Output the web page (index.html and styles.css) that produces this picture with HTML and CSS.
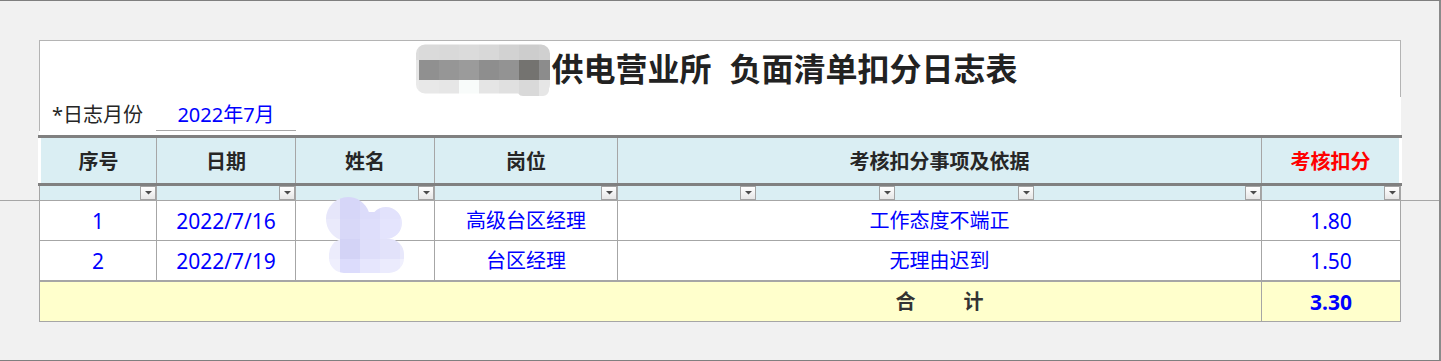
FILE: index.html
```html
<!DOCTYPE html>
<html lang="zh-CN">
<head>
<meta charset="utf-8">
<title>负面清单扣分日志表</title>
<link rel="stylesheet" href="styles.css">
</head>
<body>
<div class="frame">
  <div class="sheet">
    <div class="titlebox">
      <div class="title">
        <svg class="blur-title" width="136" height="56" viewBox="416 41 136 56" aria-hidden="true">
          <defs>
            <clipPath id="tclip">
              <rect x="417" y="44.5" width="134" height="49" rx="9"/>
              <rect x="518" y="60" width="32" height="36" rx="6"/>
            </clipPath>
          </defs>
          <g clip-path="url(#tclip)">
            <rect x="410" y="40" width="10" height="20" fill="#dddddd"/>
            <rect x="420" y="40" width="20" height="20" fill="#dadada"/>
            <rect x="440" y="40" width="20" height="20" fill="#d9d9d9"/>
            <rect x="460" y="40" width="20" height="20" fill="#dbdbdb"/>
            <rect x="480" y="40" width="20" height="20" fill="#d8d8d8"/>
            <rect x="500" y="40" width="20" height="20" fill="#d2d2d2"/>
            <rect x="520" y="40" width="20" height="20" fill="#cdcdcd"/>
            <rect x="540" y="40" width="20" height="20" fill="#d0d0d0"/>
            <rect x="410" y="60" width="10" height="20" fill="#e6e6e6"/>
            <rect x="420" y="60" width="20" height="20" fill="#909090"/>
            <rect x="440" y="60" width="20" height="20" fill="#969696"/>
            <rect x="460" y="60" width="20" height="20" fill="#9b9b9b"/>
            <rect x="480" y="60" width="20" height="20" fill="#8e8e8e"/>
            <rect x="500" y="60" width="20" height="20" fill="#939393"/>
            <rect x="520" y="60" width="20" height="20" fill="#747370"/>
            <rect x="540" y="60" width="20" height="20" fill="#8c8c8c"/>
            <rect x="410" y="80" width="10" height="20" fill="#eaeaea"/>
            <rect x="420" y="80" width="20" height="20" fill="#e8e8e8"/>
            <rect x="440" y="80" width="20" height="20" fill="#e6e6e6"/>
            <rect x="460" y="80" width="20" height="20" fill="#f8fbfa"/>
            <rect x="480" y="80" width="20" height="20" fill="#e5e5e5"/>
            <rect x="500" y="80" width="20" height="20" fill="#e0e0e0"/>
            <rect x="520" y="80" width="20" height="20" fill="#d9d9d9"/>
            <rect x="540" y="80" width="20" height="20" fill="#e6e6e6"/>
          </g>
        </svg><span>供电营业所</span><span class="sp"></span><span>负面清单扣分日志表</span>
      </div>
      <div class="meta">
        <div class="meta-label">*日志月份</div>
        <div class="meta-value">2022年7月</div>
      </div>
    </div>

    <div class="head">
      <div class="hc">序号</div>
      <div class="hc">日期</div>
      <div class="hc">姓名</div>
      <div class="hc">岗位</div>
      <div class="hc">考核扣分事项及依据</div>
      <div class="hc red">考核扣分</div>
    </div>

    <div class="filter">
      <div class="fc"><span class="fb"><svg width="7" height="4" viewBox="0 0 7 4"><polygon points="0,0 7,0 3.5,3.5" fill="#4a4a4a"/></svg></span></div>
      <div class="fc"><span class="fb"><svg width="7" height="4" viewBox="0 0 7 4"><polygon points="0,0 7,0 3.5,3.5" fill="#4a4a4a"/></svg></span></div>
      <div class="fc"><span class="fb"><svg width="7" height="4" viewBox="0 0 7 4"><polygon points="0,0 7,0 3.5,3.5" fill="#4a4a4a"/></svg></span></div>
      <div class="fc"><span class="fb"><svg width="7" height="4" viewBox="0 0 7 4"><polygon points="0,0 7,0 3.5,3.5" fill="#4a4a4a"/></svg></span></div>
      <div class="fc fc-split">
        <div class="fs"><span class="fb"><svg width="7" height="4" viewBox="0 0 7 4"><polygon points="0,0 7,0 3.5,3.5" fill="#4a4a4a"/></svg></span></div>
        <div class="fs"><span class="fb"><svg width="7" height="4" viewBox="0 0 7 4"><polygon points="0,0 7,0 3.5,3.5" fill="#4a4a4a"/></svg></span></div>
        <div class="fs"><span class="fb"><svg width="7" height="4" viewBox="0 0 7 4"><polygon points="0,0 7,0 3.5,3.5" fill="#4a4a4a"/></svg></span></div>
        <div class="fs"><span class="fb"><svg width="7" height="4" viewBox="0 0 7 4"><polygon points="0,0 7,0 3.5,3.5" fill="#4a4a4a"/></svg></span></div>
      </div>
      <div class="fc"><span class="fb"><svg width="7" height="4" viewBox="0 0 7 4"><polygon points="0,0 7,0 3.5,3.5" fill="#4a4a4a"/></svg></span></div>
    </div>

    <div class="row">
      <div class="c num">1</div>
      <div class="c num">2022/7/16</div>
      <div class="c c-name">
        <svg class="blur-name" width="90" height="84" viewBox="320 195 90 84" aria-hidden="true">
          <defs>
            <clipPath id="nclip">
              <circle cx="348" cy="219" r="22"/>
              <circle cx="386" cy="223" r="16"/>
              <rect x="348" y="212" width="38" height="28"/>
              <rect x="329" y="239" width="75" height="34" rx="15"/>
            </clipPath>
          </defs>
          <g clip-path="url(#nclip)">
            <rect x="320" y="195" width="20" height="24" fill="#e6e6fa"/>
            <rect x="340" y="195" width="20" height="24" fill="#d6d6f8"/>
            <rect x="360" y="195" width="20" height="24" fill="#dcdcfa"/>
            <rect x="380" y="195" width="20" height="24" fill="#e2e2fc"/>
            <rect x="400" y="195" width="10" height="24" fill="#e6e6fc"/>
            <rect x="320" y="219" width="20" height="20" fill="#eaeafb"/>
            <rect x="340" y="219" width="20" height="20" fill="#d8d8f8"/>
            <rect x="360" y="219" width="20" height="20" fill="#dedefb"/>
            <rect x="380" y="219" width="20" height="20" fill="#e4e4fd"/>
            <rect x="400" y="219" width="10" height="20" fill="#e8e8fd"/>
            <rect x="320" y="239" width="20" height="20" fill="#ececfc"/>
            <rect x="340" y="239" width="20" height="20" fill="#d3d3f6"/>
            <rect x="360" y="239" width="20" height="20" fill="#dedefa"/>
            <rect x="380" y="239" width="20" height="20" fill="#e2e2fa"/>
            <rect x="400" y="239" width="10" height="20" fill="#e8e8fb"/>
            <rect x="320" y="259" width="20" height="20" fill="#efeffd"/>
            <rect x="340" y="259" width="20" height="20" fill="#dcdcfc"/>
            <rect x="360" y="259" width="20" height="20" fill="#e6e6fd"/>
            <rect x="380" y="259" width="20" height="20" fill="#ebebfd"/>
            <rect x="400" y="259" width="10" height="20" fill="#f0f0fd"/>
          </g>
        </svg>
      </div>
      <div class="c">高级台区经理</div>
      <div class="c">工作态度不端正</div>
      <div class="c num">1.80</div>
    </div>

    <div class="row row-last">
      <div class="c num">2</div>
      <div class="c num">2022/7/19</div>
      <div class="c"></div>
      <div class="c">台区经理</div>
      <div class="c">无理由迟到</div>
      <div class="c num">1.50</div>
    </div>

    <div class="row total">
      <div class="t-blank"></div>
      <div class="c t-label"><span>合</span><span class="t-gap"></span><span>计</span></div>
      <div class="c num t-sum">3.30</div>
    </div>
  </div>
</div>
</body>
</html>
```

FILE: styles.css
```css
* {
  box-sizing: border-box;
}

html,
body {
  margin: 0;
  padding: 0;
}

body {
  width: 1441px;
  height: 361px;
  overflow: hidden;
  background: #f1f1f1;
  font-family: "Noto Sans", "Noto Sans CJK SC", sans-serif;
}

.frame {
  height: 361px;
  border-top: 1px solid #7f7f7f;
  border-right: 2px solid #8a8a8a;
  border-bottom: 1px solid #7f7f7f;
  padding: 39px 0 0 39px;
  background: linear-gradient(#a6a6a6, #a6a6a6) 0 199px / 100% 1px no-repeat, #f1f1f1;
}

.sheet {
  width: 1362px;
}

/* ---------- title block ---------- */
.titlebox {
  height: 95px;
  border-top: 1px solid #b4b4b4;
  background:
    linear-gradient(#b4b4b4, #b4b4b4) left top / 1px 90px no-repeat,
    linear-gradient(#b4b4b4, #b4b4b4) right top / 1px 56px no-repeat,
    #ffffff;
}

.title {
  height: 56px;
  padding-right: 7px;
  display: flex;
  align-items: center;
  justify-content: center;
  font-size: 32px;
  line-height: 40px;
  font-weight: 700;
  color: #222222;
  white-space: nowrap;
}

.blur-title {
  display: block;
  flex: none;
}

.title .sp {
  display: inline-block;
  width: 18px;
}

.meta {
  display: flex;
  height: 34px;
  font-size: 20px;
  line-height: 24px;
}

.meta-label {
  width: 117px;
  padding-top: 6px;
  text-align: center;
  color: #262626;
}

.meta-value {
  width: 140px;
  padding-top: 6px;
  text-align: center;
  color: #0000ff;
  border-bottom: 1px solid #a6a6a6;
}

/* ---------- header ---------- */
.head {
  margin-left: -1px;
  width: 1364px;
  height: 51px;
  padding: 0 3px;
  border-top: 3px solid #808080;
  border-bottom: 3px solid #808080;
  background: #ffffff;
  display: grid;
  grid-template-columns: 116px 139px 139px 183px 644px 137px;
}

.hc {
  background: #daeef3;
  border-right: 1px solid #a6a6a6;
  display: flex;
  align-items: center;
  justify-content: center;
  font-size: 20px;
  font-weight: 700;
  color: #262626;
}

.hc:last-child {
  border-right: 0;
}

.hc.red {
  color: #ff0000;
}

/* ---------- filter row ---------- */
.filter {
  height: 15px;
  display: grid;
  grid-template-columns: 117px 139px 139px 183px 644px 139px;
  border-left: 1px solid #a6a6a6;
  border-bottom: 1px solid #a6a6a6;
}

.fc {
  background: #daeef3;
  border-right: 1px solid #a6a6a6;
  display: flex;
  justify-content: flex-end;
}

.fc-split {
  display: grid;
  grid-template-columns: 138px 139px 139px 227px;
}

.fs {
  display: flex;
  justify-content: flex-end;
}

.fb {
  width: 16px;
  height: 14px;
  border: 1px solid #a3a3a3;
  background: linear-gradient(#ffffff, #e6e6e6);
  display: flex;
  align-items: center;
  justify-content: center;
}

.fb svg {
  display: block;
}

/* ---------- body rows ---------- */
.row {
  height: 40px;
  display: grid;
  grid-template-columns: 117px 139px 139px 183px 644px 139px;
  border-left: 1px solid #a6a6a6;
  border-bottom: 1px solid #a6a6a6;
  background: #ffffff;
}

.row-last {
  height: 41px;
  border-bottom-width: 2px;
}

.c {
  border-right: 1px solid #a6a6a6;
  display: flex;
  align-items: center;
  justify-content: center;
  font-size: 20px;
  line-height: 24px;
  color: #0000ff;
  white-space: nowrap;
}

.c.num {
  font-size: 21px;
}

.c-name {
  position: relative;
}

.blur-name {
  position: absolute;
  left: 24px;
  top: -6px;
  display: block;
}

.total {
  background: #ffffcc;
}

.t-blank {
  grid-column: span 4;
}

.t-label {
  color: #333333;
  font-weight: 700;
}

.t-gap {
  display: inline-block;
  width: 48px;
}

.t-sum {
  font-weight: 700;
}
```
